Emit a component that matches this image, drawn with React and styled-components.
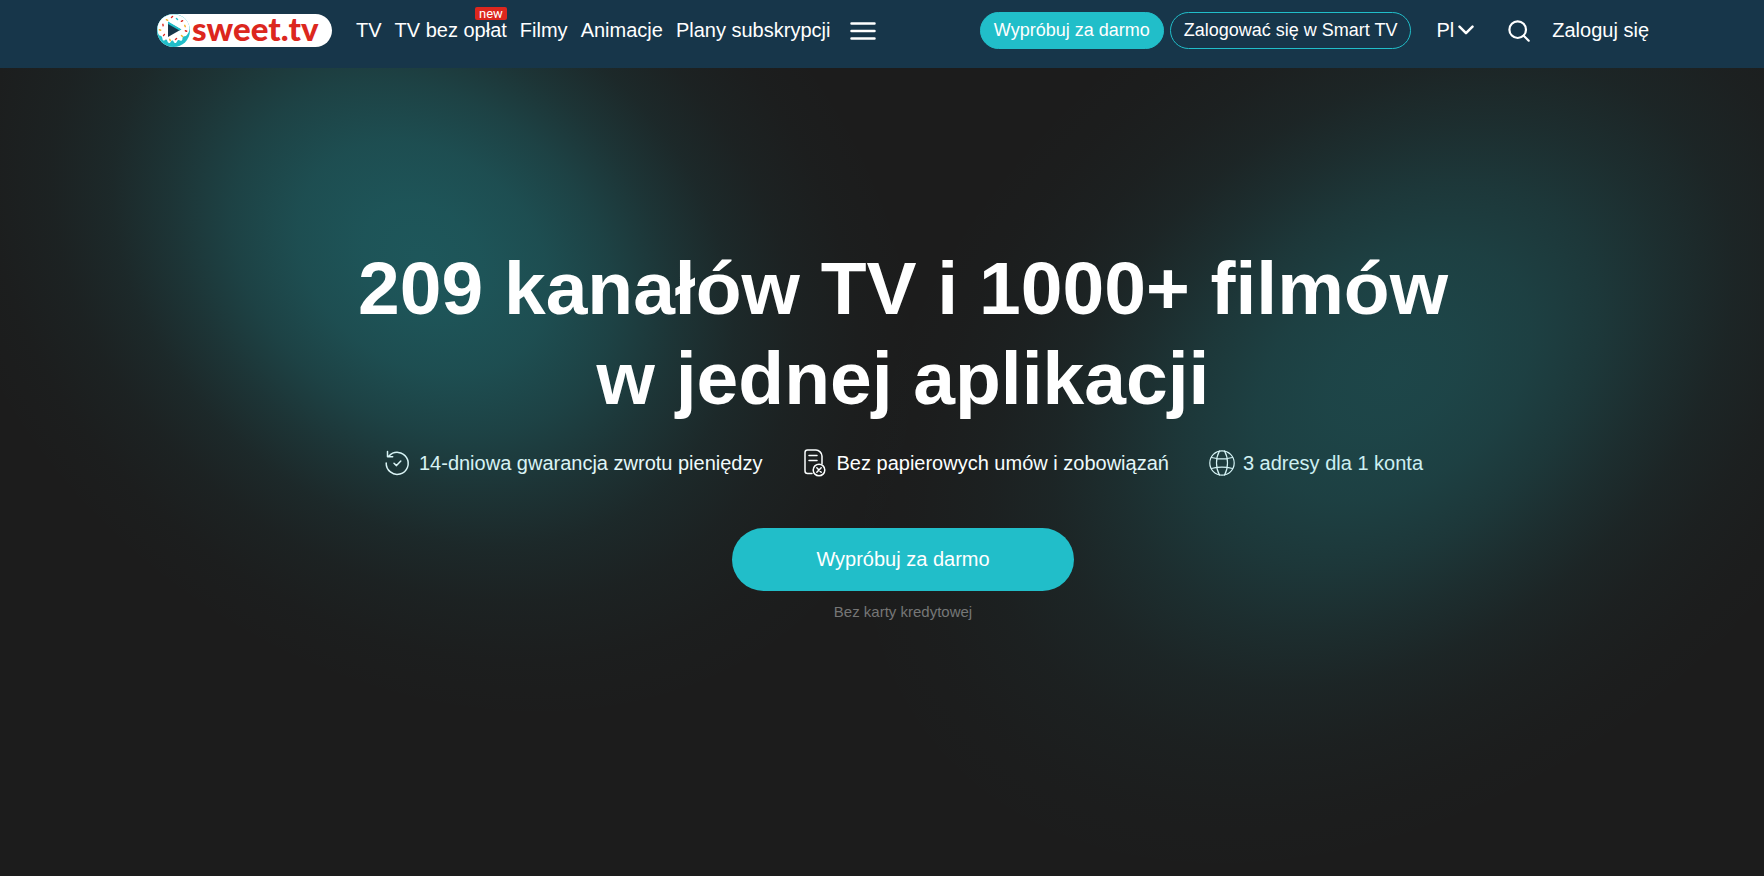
import React from "react";
import styled, { createGlobalStyle } from "styled-components";

const GlobalStyle = createGlobalStyle`
  *, *::before, *::after { box-sizing: border-box; }
  body {
    margin: 0;
    background: #1c1c1c;
    color: #fff;
    font-family: "Liberation Sans", Arial, sans-serif;
    font-size: 20px;
    line-height: 24px;
  }
`;

const Page = styled.div`
  display: flex;
  flex-direction: column;
  min-height: 100vh;
  position: relative;
  overflow: hidden;
`;

const Header = styled.header`
  position: relative;
  z-index: 3;
  display: flex;
  align-items: flex-start;
  justify-content: space-between;
  height: 68px;
  padding: 12px 115px 0 157px;
  background: #17364a;
`;

const Cluster = styled.div`
  display: flex;
  align-items: center;
  height: 37px;
`;

const LogoLink = styled.a`
  display: flex;
  align-items: center;
  gap: 2px;
  width: 175px;
  height: 33px;
  margin-right: 24px;
  border-radius: 17px;
  background: #fff;
  text-decoration: none;
`;

const LogoText = styled.span`
  color: #dc271e;
  font: 900 33px/33px Lato, "Open Sans", sans-serif;
  padding-bottom: 4px;
`;

const Nav = styled.nav`
  display: flex;
  gap: 13px;
  margin-right: 20px;
`;

const NavLink = styled.a`
  position: relative;
  color: #fff;
  text-decoration: none;
  line-height: 36px;
  height: 37px;
  white-space: nowrap;
`;

const Badge = styled.span`
  position: absolute;
  right: 0;
  top: -5px;
  padding: 0 4px;
  border-radius: 2px;
  background: #dc271e;
  font-family: Roboto, sans-serif;
  font-size: 13px;
  line-height: 13px;
`;

const IconButton = styled.button`
  display: flex;
  align-items: center;
  padding: 0;
  border: 0;
  background: none;
  color: #fff;
  cursor: pointer;
`;

const Pill = styled.button`
  height: 37px;
  padding: 0 13px 2px;
  margin-right: 6px;
  border: 1px solid #21bec9;
  border-radius: 19px;
  background: ${(p) => (p.$filled ? "#21bec9" : "transparent")};
  color: #fff;
  font: 18px/20px "Liberation Sans", Arial, sans-serif;
  white-space: nowrap;
  cursor: pointer;
`;

const LanguageButton = styled(IconButton)`
  gap: 4px;
  margin: 0 34px 0 19px;
  padding-bottom: 1px;
  font: 20px/36px "Liberation Sans", Arial, sans-serif;
`;

const LoginLink = styled(NavLink)`
  margin-left: 22px;
`;

const Hero = styled.main`
  flex: 1;
  display: flex;
  flex-direction: column;
  align-items: center;
  padding: 175px 20px 60px 62px;
`;

const Title = styled.h1`
  position: relative;
  z-index: 2;
  margin: 0;
  font-size: 75px;
  line-height: 90px;
  font-weight: 700;
  text-align: center;
`;

const Features = styled.ul`
  display: flex;
  flex-wrap: wrap;
  justify-content: center;
  gap: 12px 38px;
  margin: 26px 0 0;
  padding: 0;
  list-style: none;
`;

const Feature = styled.li`
  display: flex;
  align-items: center;
  gap: 8px;
  height: 28px;
  white-space: nowrap;
`;

const CallToAction = styled.button`
  position: relative;
  z-index: 2;
  width: 342px;
  height: 63px;
  margin-top: 51px;
  padding: 0 0 2px;
  border: 0;
  border-radius: 32px;
  background: #21bec9;
  color: #fff;
  font: 20px/24px "Liberation Sans", Arial, sans-serif;
  cursor: pointer;
`;

const Note = styled.p`
  margin: 12px 0 0;
  color: #767676;
  font-size: 15px;
  line-height: 18px;
`;

const Glow = styled.div`
  position: absolute;
  z-index: 1;
  pointer-events: none;
  left: ${(p) => p.$left};
  top: ${(p) => p.$top};
  width: ${(p) => p.$width};
  height: ${(p) => p.$height};
  transform: translate(-50%, -50%) rotate(${(p) => p.$angle});
  opacity: ${(p) => p.$strength};
  background: radial-gradient(
    closest-side,
    rgba(33, 190, 201, 1) 0%,
    rgba(33, 190, 201, 0.96) 12%,
    rgba(33, 190, 201, 0.85) 25%,
    rgba(33, 190, 201, 0.65) 38%,
    rgba(33, 190, 201, 0.42) 50%,
    rgba(33, 190, 201, 0.22) 62%,
    rgba(33, 190, 201, 0.1) 74%,
    rgba(33, 190, 201, 0.03) 87%,
    rgba(33, 190, 201, 0) 100%
  );
`;

const sprinkles = [
  [10, 6, 30, "#f0b429"], [15, 3, -40, "#dc271e"], [20, 5, 40, "#21bec9"],
  [25, 7, -30, "#dc271e"], [28, 12, 70, "#f0b429"], [6, 11, 80, "#dc271e"],
  [3, 16, 20, "#f0b429"], [7, 21, -50, "#dc271e"], [29, 17, 20, "#dc271e"],
  [13, 26, 70, "#f0b429"], [19, 25, -40, "#dc271e"], [25, 22, 40, "#f0b429"],
];

function DonutMark() {
  return (
    <svg width="33" height="33" viewBox="0 0 33 33" aria-hidden="true">
      <circle cx="16.5" cy="16.5" r="16.5" fill="#21bec9" />
      <path
        d="M16.500 0.300C7.500 0.300 0.500 7 0.500 15c0 3 .5 5 2 6.500 1.300 1 1.800 0 2.500 1.500s.2 3.500 1.700 3.500 1.300-1.500 2.600-1 1 3.500 2.900 3.500 1.500-2.500 3.100-2.500 1.200 2.500 3 2.500 1.500-2.500 3-3 2.200 1.500 3.500.5 0-2.800 1.300-3.800 2.400 0 3.600-1.500 2.800-3.500 2.800-6.700C32.500 7 25.500 0.300 16.500 0.300z"
        fill="#fff"
      />
      {sprinkles.map(([x, y, angle, fill]) => (
        <rect key={`${x}-${y}`} x={x - 1.4} y={y - 0.7} width="2.8" height="1.4" rx="0.6" fill={fill} transform={`rotate(${angle} ${x} ${y})`} />
      ))}
      <path d="M11 8v15l13-7.500z" fill="#17364a" />
      <path d="M11 7.500l13.500 8-2 1L11 10z" fill="#21bec9" />
    </svg>
  );
}

const line = { fill: "none", stroke: "currentColor", strokeLinecap: "round", strokeLinejoin: "round", "aria-hidden": true };

function MenuIcon() {
  return (
    <svg width="26" height="20" viewBox="0 0 26 20" {...line} strokeWidth="2.5">
      <path d="M1.500 2.500h23M1.500 10h23M1.500 17.500h23" />
    </svg>
  );
}

function ChevronIcon() {
  return (
    <svg width="16" height="10" viewBox="0 0 16 10" {...line} strokeWidth="2.5">
      <path d="M1.500 1.700L8 8.200l6.500-6.500" />
    </svg>
  );
}

function SearchIcon() {
  return (
    <svg width="22" height="22" viewBox="0 0 22 22" {...line} strokeWidth="2.2">
      <circle cx="9.700" cy="9.700" r="8.300" />
      <path d="M15.700 15.700l5 5" />
    </svg>
  );
}

function RefundIcon() {
  return (
    <svg width="28" height="28" viewBox="0 0 28 28" {...line} strokeWidth="1.5">
      <path d="M3.200 14A11 11 0 1 0 6 7M4.500 2.500v5.200h5.200" />
      <path d="M11 14.300l2.500 2.300 4.300-4.600" />
    </svg>
  );
}

function ContractIcon() {
  return (
    <svg width="28" height="28" viewBox="0 0 28 28" {...line} strokeWidth="1.5">
      <path d="M11 24.500H6.500a2.500 2.500 0 0 1-2.500-2.500V3.500A2.500 2.500 0 0 1 6.500 1h8.500c3 0 6 3 6 6v8" />
      <path d="M8 6.500h8M8 11.500h8" />
      <circle cx="18" cy="21" r="5.800" />
      <path d="M15.800 18.800l4.400 4.400M20.200 18.800l-4.400 4.400" />
    </svg>
  );
}

function GlobeIcon() {
  return (
    <svg width="28" height="28" viewBox="0 0 28 28" {...line} strokeWidth="1.2">
      <circle cx="15" cy="14" r="12.200" />
      <path d="M12.500 2c-4 7-4 17 0 24M17.500 2c4 7 4 17 0 24M4.500 8.500c6.500 1.700 14.500 1.700 21 0M4.500 19.500c6.500-1.700 14.500-1.700 21 0" />
    </svg>
  );
}

export default function App() {
  return (
    <Page>
      <GlobalStyle />
      <Header>
        <Cluster>
          <LogoLink href="#" aria-label="sweet.tv">
            <DonutMark />
            <LogoText>sweet.tv</LogoText>
          </LogoLink>
          <Nav>
            <NavLink href="#">TV</NavLink>
            <NavLink href="#">
              TV bez opłat<Badge>new</Badge>
            </NavLink>
            <NavLink href="#">Filmy</NavLink>
            <NavLink href="#">Animacje</NavLink>
            <NavLink href="#">Plany subskrypcji</NavLink>
          </Nav>
          <IconButton type="button" aria-label="Menu">
            <MenuIcon />
          </IconButton>
        </Cluster>
        <Cluster>
          <Pill type="button" $filled>Wypróbuj za darmo</Pill>
          <Pill type="button">Zalogować się w Smart TV</Pill>
          <LanguageButton type="button">
            Pl
            <ChevronIcon />
          </LanguageButton>
          <IconButton type="button" aria-label="Szukaj">
            <SearchIcon />
          </IconButton>
          <LoginLink href="#">Zaloguj się</LoginLink>
        </Cluster>
      </Header>
      <Glow $left="24%" $top="258px" $width="1080px" $height="840px" $angle="36deg" $strength="0.36" />
      <Glow $left="79%" $top="375px" $width="1220px" $height="860px" $angle="-38deg" $strength="0.26" />
      <Hero>
        <Title>
          209 kanałów TV i 1000+ filmów
          <br />w jednej aplikacji
        </Title>
        <Features>
          <Feature>
            <RefundIcon />
            14-dniowa gwarancja zwrotu pieniędzy
          </Feature>
          <Feature>
            <ContractIcon />
            Bez papierowych umów i zobowiązań
          </Feature>
          <Feature>
            <GlobeIcon />3 adresy dla 1 konta
          </Feature>
        </Features>
        <CallToAction type="button">Wypróbuj za darmo</CallToAction>
        <Note>Bez karty kredytowej</Note>
      </Hero>
    </Page>
  );
}
